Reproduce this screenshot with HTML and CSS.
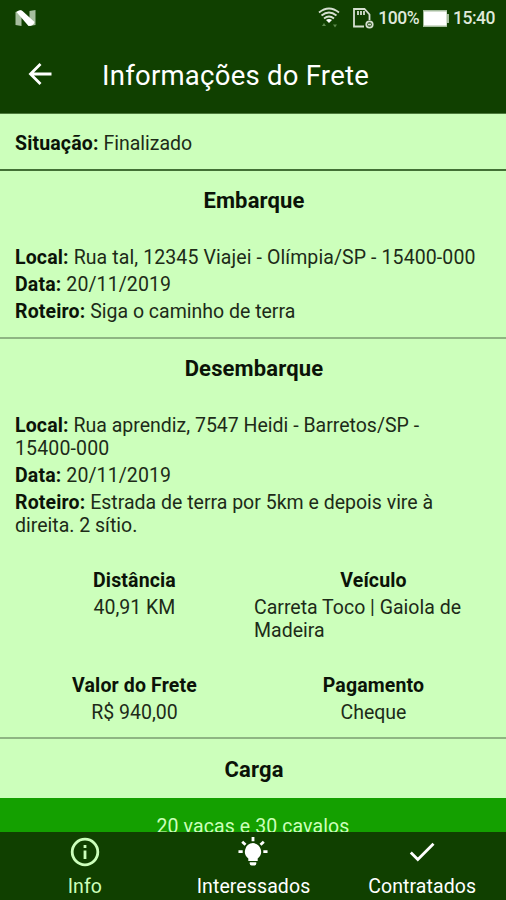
FILE: index.html
```html
<!DOCTYPE html>
<html lang="pt-BR">
<head>
    <meta charset="UTF-8">
    <meta name="viewport" content="width=device-width, initial-scale=1.0">
    <title>Informações do Frete</title>
    <link rel="stylesheet" href="styles.css">
</head>
<body>

<header>
    <div class="status-bar">
        <svg class="logo-n" viewBox="0 0 20 16">
            <path d="M0 2 L6 0 V16 L0 15 Z M14 1 L20 0 V15 L14 16 Z" fill="#a6bd9e"/>
            <path d="M1 2 Q4 -1 7 1 L19 12 Q18 16 13 16 Z" fill="#fff"/>
        </svg>
        <div class="status-icons">
            <svg class="wifi" viewBox="0 0 22 22" fill="none" stroke="#d5dfd0" stroke-width="1.8">
                <path d="M1 5.5 Q11 -2.5 21 5.5 M3.5 8.5 Q11 2.5 18.5 8.5 M6 11.5 Q11 7.5 16 11.5"/>
                <path d="M8 13 Q11 11 14 13 L11 16 Z" fill="#fff" stroke="none"/>
                <path d="M6 16 L8 19 H4 Z M15 17.5 H19 L17 20.5 Z" fill="#5d8a4d" stroke="none"/>
            </svg>
            <svg class="sd-card" viewBox="0 0 21 21" fill="none" stroke="#d5dfd0" stroke-width="1.8">
                <path d="M11 18.5 H1 V1 H11.5 L16.5 6.5 V12"/>
                <path d="M5 3 V7 M8 3 V7 M11 3 V7"/>
                <circle cx="16.5" cy="16.5" r="3.2"/>
                <path d="M15 16.5 H18"/>
            </svg>
            <span class="percent">100%</span>
            <svg class="battery" viewBox="0 0 26 17">
                <path d="M0 0 H24 V4 H26 V13 H24 V17 H0 Z" fill="#a6bd9e"/>
                <rect x="1" y="1.5" width="22.5" height="14" fill="#fff"/>
            </svg>
            <span class="clock">15:40</span>
        </div>
    </div>
    <div class="app-bar">
        <svg class="back" viewBox="0 0 24 22" fill="none" stroke="#fff" stroke-width="2.8">
            <path d="M12.5 1 L2.5 11 L12.5 21 M2.5 11 H23.5"/>
        </svg>
        <h1>Informações do Frete</h1>
    </div>
</header>

<main>
    <section class="status">
        <p><b>Situação:</b> Finalizado</p>
    </section>

    <section class="pickup">
        <h2>Embarque</h2>
        <p class="address"><b>Local:</b> Rua tal, 12345 Viajei - Olímpia/SP - 15400-000</p>
        <p class="date"><b>Data:</b> 20/11/2019</p>
        <p><b>Roteiro:</b> Siga o caminho de terra</p>
    </section>

    <section class="delivery">
        <h2>Desembarque</h2>
        <p><b>Local:</b> Rua aprendiz, 7547 Heidi - Barretos/SP - <span class="zip">15400-000</span></p>
        <p class="date"><b>Data:</b> 20/11/2019</p>
        <p><b>Roteiro:</b> Estrada de terra por 5km e depois vire à direita. 2 sítio.</p>
        <div class="details">
            <div class="detail">
                <b>Distância</b>
                <span>40,91 KM</span>
            </div>
            <div class="detail">
                <b>Veículo</b>
                <span>Carreta Toco | Gaiola de Madeira</span>
            </div>
            <div class="detail">
                <b>Valor do Frete</b>
                <span>R$ 940,00</span>
            </div>
            <div class="detail">
                <b>Pagamento</b>
                <span>Cheque</span>
            </div>
        </div>
    </section>

    <section class="cargo">
        <h2>Carga</h2>
        <div class="cargo-item">20 vacas e 30 cavalos</div>
    </section>
</main>

<nav>
    <a class="tab active">
        <svg viewBox="0 0 30 30" fill="none" stroke="currentColor" stroke-width="2.8">
            <circle cx="15" cy="15" r="12.8"/>
            <path d="M15 13.5 V22 M15 8 V11"/>
        </svg>
        <span>Info</span>
    </a>
    <a class="tab">
        <svg class="bulb" viewBox="0 0 32 32" fill="currentColor">
            <path d="M16 6.5 A9.2 9.2 0 0 1 21 23 V25.5 H11 V23 A9.2 9.2 0 0 1 16 6.5 Z"/>
            <path d="M12.5 27 H19.5 V28 Q19.5 30.5 17.5 30.5 H14.5 Q12.5 30.5 12.5 28 Z"/>
            <path d="M16 0 V4.5 M0.5 15.5 H5 M27 15.5 H31.5 M4.5 5 L8 8.2 M27.5 5 L24 8.2" stroke="currentColor" stroke-width="3"/>
        </svg>
        <span>Interessados</span>
    </a>
    <a class="tab">
        <svg viewBox="0 0 30 30" fill="none" stroke="currentColor" stroke-width="2.8">
            <path d="M3.8 15.5 L10.8 22.5 L26.5 6.8"/>
        </svg>
        <span>Contratados</span>
    </a>
</nav>

</body>
</html>
```

FILE: styles.css
```css
* {
    box-sizing: border-box;
}

body {
    font-family: Roboto, sans-serif;
    font-size: 19.5px;
    line-height: 23px;
    letter-spacing: 0.1px;
    background-color: #ccffbb;
    color: #1d2b18;
    margin: 0;
    height: 100vh;
    display: flex;
    flex-direction: column;
    overflow: hidden;
}

header {
    background-color: #104000;
    color: #fff;
    height: 114px;
    flex-shrink: 0;
    border-bottom: 1px solid #4d7a3d;
}

.status-bar {
    height: 36px;
    padding: 0 11px 0 15px;
    display: flex;
    justify-content: space-between;
    align-items: center;
}

.logo-n {
    width: 21px;
    height: 16px;
}

.status-icons {
    display: flex;
    align-items: center;
    font-size: 17.5px;
    font-weight: 500;
    letter-spacing: -0.5px;
    color: #dfe8da;
}

.wifi {
    width: 22px;
    height: 22px;
    margin-right: 13px;
}

.sd-card {
    width: 21px;
    height: 21px;
    margin-right: 4px;
}

.battery {
    width: 26px;
    height: 17px;
    margin: 0 4px;
}

.app-bar {
    height: 77px;
    padding: 1px 0 0 28px;
    display: flex;
    align-items: center;
}

.back {
    width: 24px;
    height: 22px;
    margin: 0 50px 2px 0;
}

h1 {
    font-size: 27.5px;
    line-height: 32px;
    font-weight: 400;
    letter-spacing: 0.25px;
    margin: 2px 0 0;
}

main {
    flex: 1;
    min-height: 0;
    overflow: hidden;
}

section {
    padding: 0 13px 0 15px;
    border-bottom: 2px solid #8fb583;
}

b,
h2 {
    color: #0b1308;
    font-weight: 700;
    letter-spacing: 0.15px;
}

p {
    margin: 0 0 4px;
    letter-spacing: 0;
}

h2 {
    font-size: 22px;
    line-height: 26px;
    text-align: center;
    margin: 0;
}

.address,
.date {
    letter-spacing: 0.1px;
}

.zip {
    white-space: nowrap;
    letter-spacing: 0.15px;
}

.status {
    height: 57px;
    padding-top: 18px;
    border-bottom-color: #437036;
}

.pickup,
.delivery {
    padding-top: 17px;
}

.pickup {
    height: 168px;
}

.delivery {
    height: 400px;
}

.pickup h2,
.delivery h2 {
    margin-bottom: 32px;
}

.details {
    display: grid;
    grid-template-columns: 1fr 1fr;
    row-gap: 32px;
    margin-top: 32px;
}

.detail {
    display: flex;
    flex-direction: column;
    align-items: center;
    gap: 4px;
}

.detail span {
    letter-spacing: 0;
}

.cargo {
    padding: 18px 0 0;
}

.cargo h2 {
    padding-left: 2px;
}

.cargo-item {
    background-color: #14a000;
    color: #ccffbb;
    height: 70px;
    margin-top: 15px;
    padding-top: 17px;
    text-align: center;
}

nav {
    background-color: #104000;
    color: #fff;
    height: 68px;
    flex-shrink: 0;
    display: grid;
    grid-template-columns: repeat(3, 1fr);
}

.tab {
    display: flex;
    flex-direction: column;
    align-items: center;
    padding: 5px 0 0 1px;
}

.tab svg {
    width: 30px;
    height: 30px;
    margin-bottom: 8px;
}

.tab .bulb {
    width: 32px;
}

.active {
    color: #ccffbb;
}
```
